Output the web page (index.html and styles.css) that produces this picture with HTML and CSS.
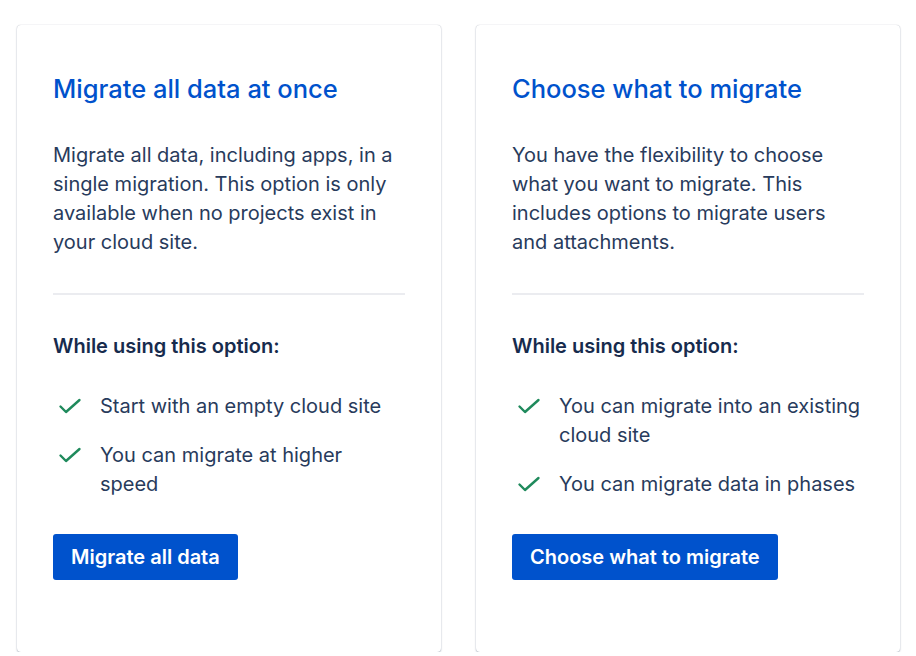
FILE: index.html
```html
<!DOCTYPE html>
<html lang="en">
<head>
<meta charset="utf-8">
<title>Migration options</title>
<link rel="stylesheet" href="styles.css">
</head>
<body>
<main class="options">
  <section class="card">
    <h2 class="card-title">Migrate all data at once</h2>
    <p class="card-desc">Migrate all data, including apps, in a single migration. This option is only available when no projects exist in your cloud site.</p>
    <hr class="divider">
    <h3 class="list-title">While using this option:</h3>
    <ul class="checks">
      <li><svg class="check" viewBox="0 0 47 29" width="47" height="29"><path d="M7.5 14.5 L13 20 L26.5 8" fill="none" stroke="#1F8A5C" stroke-width="2.4" stroke-linecap="round" stroke-linejoin="round"/></svg><span>Start with an empty cloud site</span></li>
      <li><svg class="check" viewBox="0 0 47 29" width="47" height="29"><path d="M7.5 14.5 L13 20 L26.5 8" fill="none" stroke="#1F8A5C" stroke-width="2.4" stroke-linecap="round" stroke-linejoin="round"/></svg><span>You can migrate at higher speed</span></li>
    </ul>
    <button class="btn" type="button">Migrate all data</button>
  </section>
  <section class="card">
    <h2 class="card-title">Choose what to migrate</h2>
    <p class="card-desc">You have the flexibility to choose what you want to migrate. This includes options to migrate users and attachments.</p>
    <hr class="divider">
    <h3 class="list-title">While using this option:</h3>
    <ul class="checks">
      <li><svg class="check" viewBox="0 0 47 29" width="47" height="29"><path d="M7.5 14.5 L13 20 L26.5 8" fill="none" stroke="#1F8A5C" stroke-width="2.4" stroke-linecap="round" stroke-linejoin="round"/></svg><span>You can migrate into an existing cloud site</span></li>
      <li><svg class="check" viewBox="0 0 47 29" width="47" height="29"><path d="M7.5 14.5 L13 20 L26.5 8" fill="none" stroke="#1F8A5C" stroke-width="2.4" stroke-linecap="round" stroke-linejoin="round"/></svg><span>You can migrate data in phases</span></li>
    </ul>
    <button class="btn" type="button">Choose what to migrate</button>
  </section>
</main>
</body>
</html>
```

FILE: styles.css
```css
html, body {
  margin: 0;
  padding: 0;
  background: #ffffff;
}
body {
  font-family: Inter, "Noto Sans", "Liberation Sans", sans-serif;
  color: #172B4D;
}
.options {
  display: flex;
  gap: 35px;
  padding: 25px 16px 0 17px;
  align-items: stretch;
}
.card {
  box-sizing: border-box;
  width: 424px;
  height: 627px;
  background: #fff;
  border-radius: 4px;
  box-shadow: 0 1px 2px rgba(9, 30, 66, 0.25), 0 0 1px rgba(9, 30, 66, 0.3);
  padding: 48px 36px 72px;
  display: flex;
  flex-direction: column;
}
.card-title {
  margin: 0;
  font-size: 25.5px;
  line-height: 32px;
  font-weight: 500;
  color: #0052CC;
}
.card-desc {
  margin: 36px 0 0;
  font-size: 20px;
  line-height: 29px;
  color: #283B5C;
}
.divider {
  margin: 36px 0 0;
  border: 0;
  height: 2px;
  background: #EBECF0;
}
.list-title {
  margin: 37px 0 0;
  font-size: 20px;
  line-height: 29px;
  font-weight: 600;
  color: #172B4D;
}
.checks {
  list-style: none;
  margin: 31px 0 0;
  padding: 0;
  display: flex;
  flex-direction: column;
  gap: 20px;
}
.checks li {
  display: flex;
  align-items: flex-start;
  font-size: 20px;
  line-height: 29px;
  color: #283B5C;
}
.check {
  flex: none;
  display: block;
}
.btn {
  align-self: flex-start;
  margin-top: 35px;
  height: 46px;
  padding: 0 18px;
  border: 0;
  border-radius: 3px;
  background: #0052CC;
  color: #fff;
  font-family: inherit;
  font-size: 20px;
  font-weight: 600;
  line-height: 46px;
}
```
